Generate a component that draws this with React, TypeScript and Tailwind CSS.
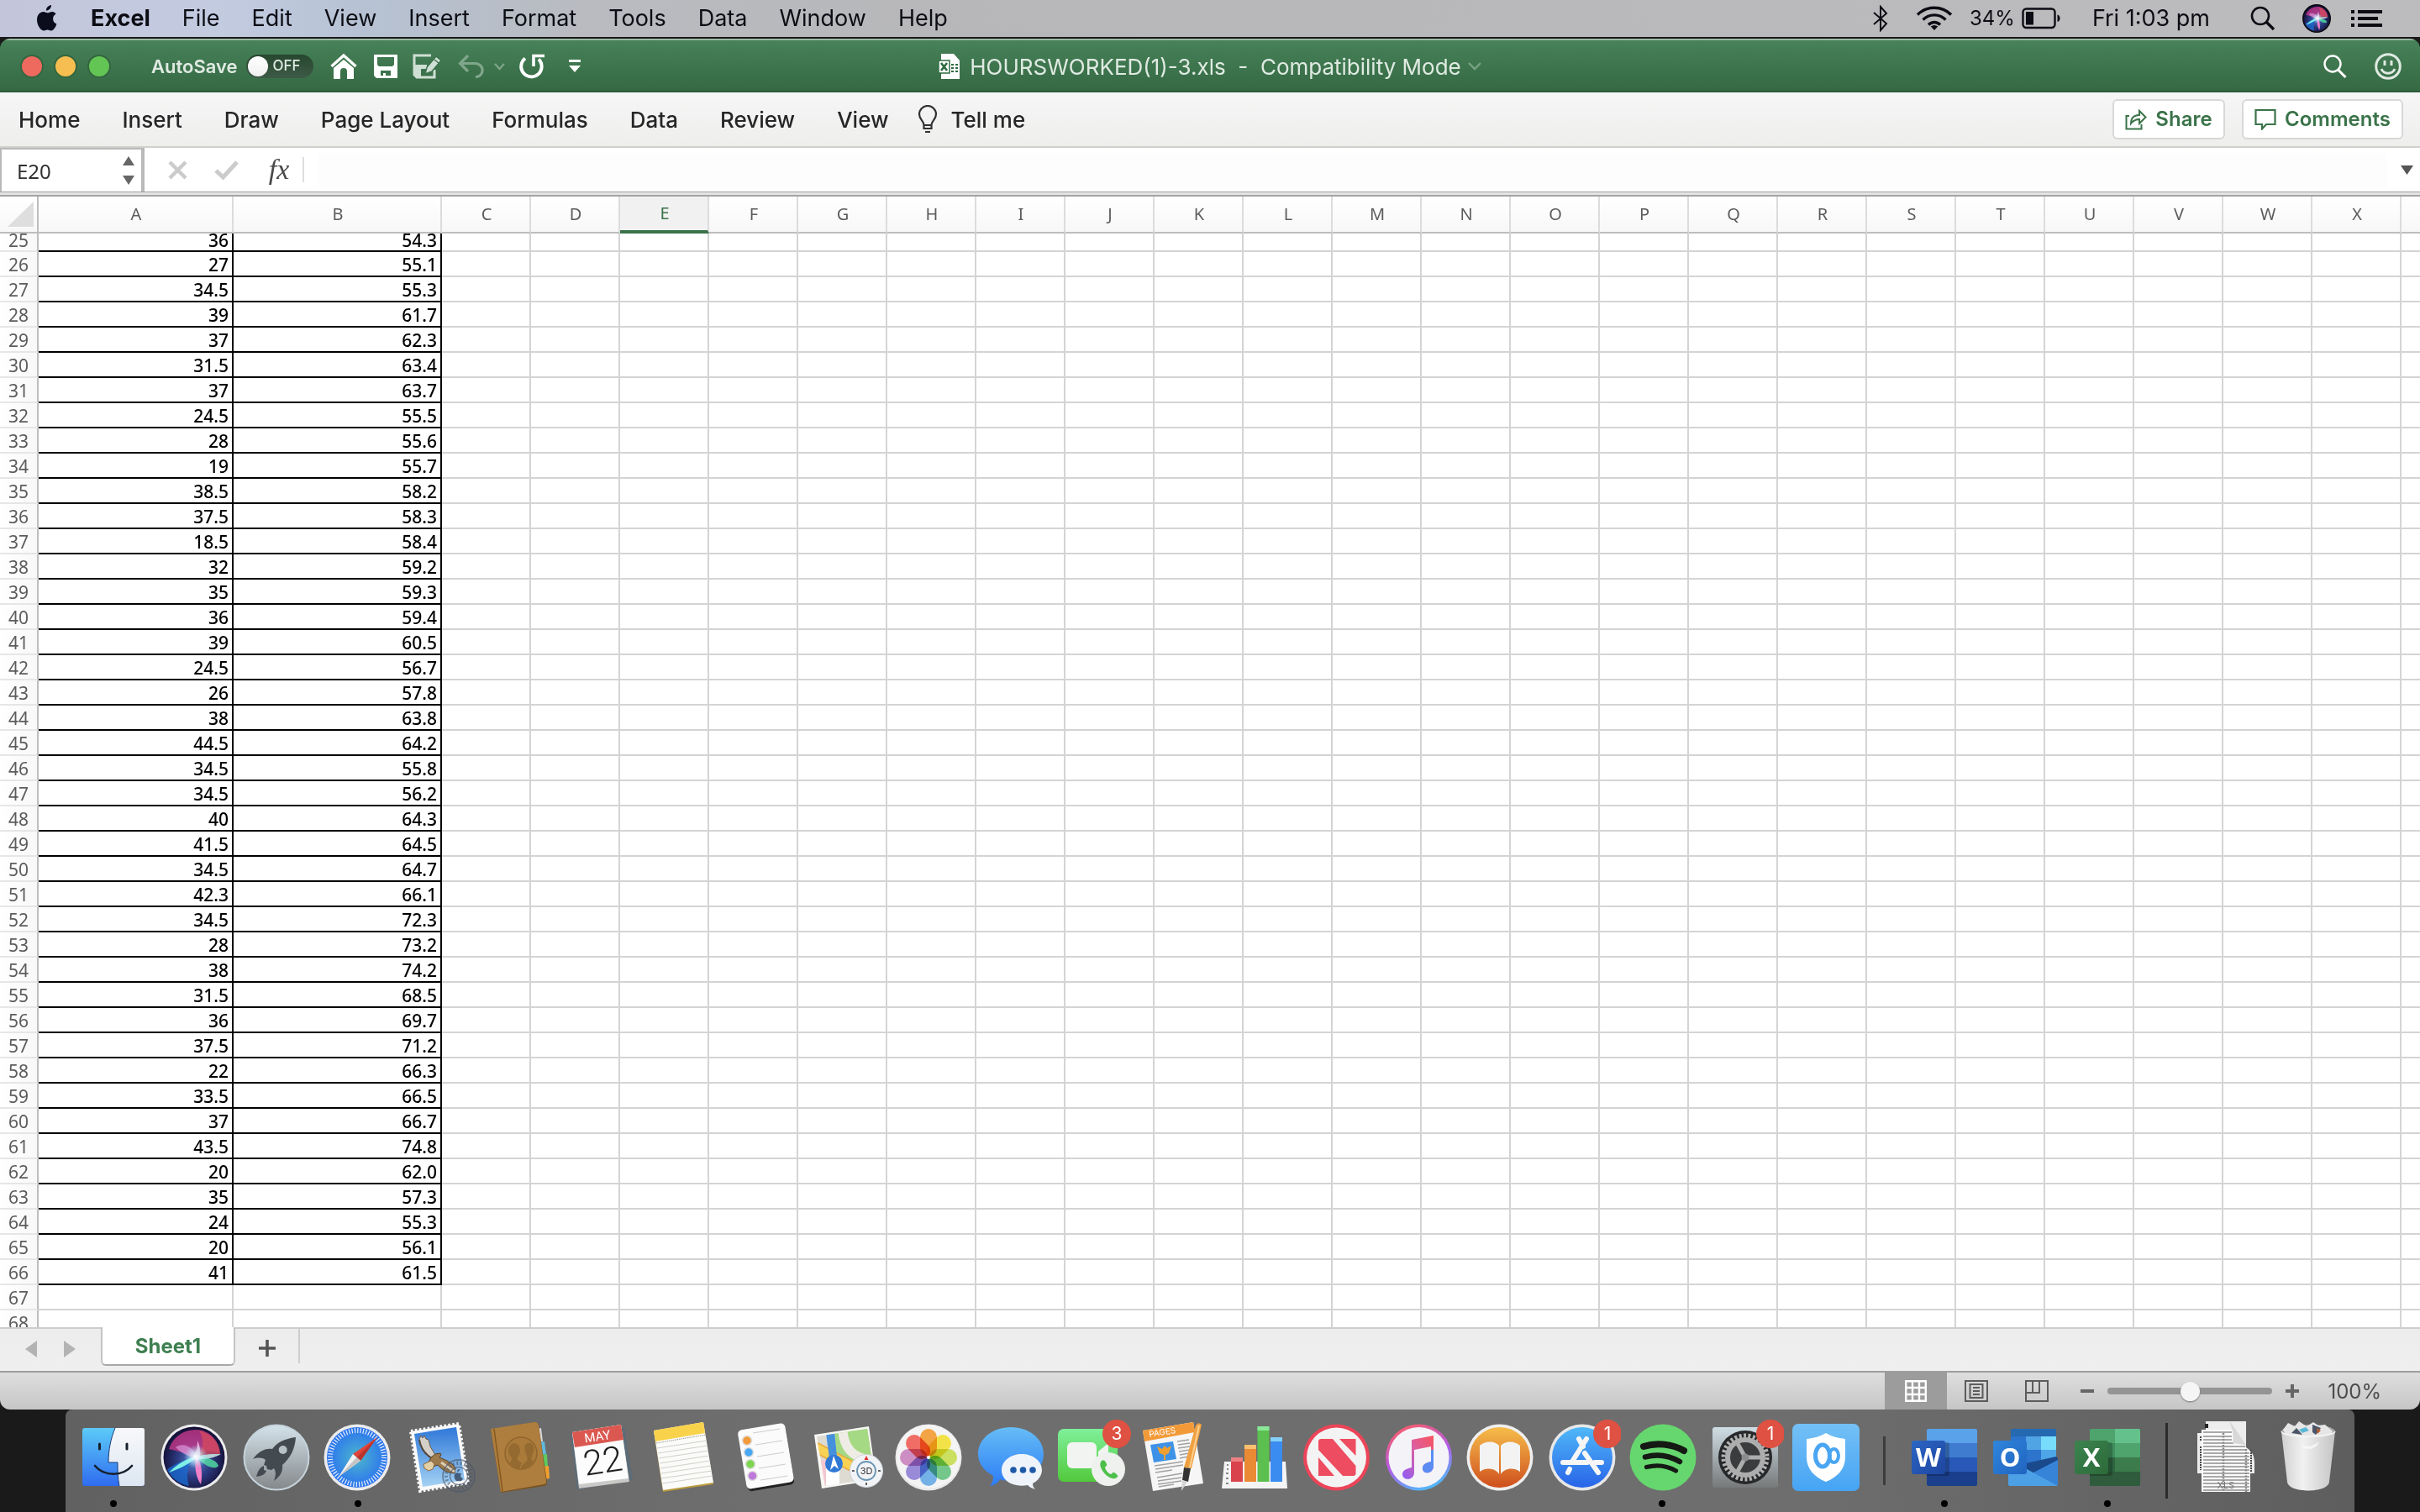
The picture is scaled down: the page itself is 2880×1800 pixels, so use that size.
import { useState, type ReactNode } from "react";
import clsx from "clsx";

const MENUS = ["File", "Edit", "View", "Insert", "Format", "Tools", "Data", "Window", "Help"];
const TABS = ["Home", "Insert", "Draw", "Page Layout", "Formulas", "Data", "Review", "View"];
const COLUMNS = "CDEFGHIJKLMNOPQRSTUVWX".split("");
const FIRST_ROW = 25;

const HOURS: [string, string][] = [
  ["36", "54.3"],
  ["27", "55.1"],
  ["34.5", "55.3"],
  ["39", "61.7"],
  ["37", "62.3"],
  ["31.5", "63.4"],
  ["37", "63.7"],
  ["24.5", "55.5"],
  ["28", "55.6"],
  ["19", "55.7"],
  ["38.5", "58.2"],
  ["37.5", "58.3"],
  ["18.5", "58.4"],
  ["32", "59.2"],
  ["35", "59.3"],
  ["36", "59.4"],
  ["39", "60.5"],
  ["24.5", "56.7"],
  ["26", "57.8"],
  ["38", "63.8"],
  ["44.5", "64.2"],
  ["34.5", "55.8"],
  ["34.5", "56.2"],
  ["40", "64.3"],
  ["41.5", "64.5"],
  ["34.5", "64.7"],
  ["42.3", "66.1"],
  ["34.5", "72.3"],
  ["28", "73.2"],
  ["38", "74.2"],
  ["31.5", "68.5"],
  ["36", "69.7"],
  ["37.5", "71.2"],
  ["22", "66.3"],
  ["33.5", "66.5"],
  ["37", "66.7"],
  ["43.5", "74.8"],
  ["20", "62.0"],
  ["35", "57.3"],
  ["24", "55.3"],
  ["20", "56.1"],
  ["41", "61.5"],
  ["", ""],
  ["", ""],
];

/* ---------- Menu bar ---------- */

const SiriOrb = ({ id }: { id: string }) => (
  <>
    <defs>
      <radialGradient id={`${id}-bg`} cx="50%" cy="55%" r="55%">
        <stop offset="0" stopColor="#5a7fd0" />
        <stop offset=".5" stopColor="#2c3a80" />
        <stop offset="1" stopColor="#120c30" />
      </radialGradient>
      <radialGradient id={`${id}-core`}>
        <stop offset="0" stopColor="#fff" />
        <stop offset=".4" stopColor="#d8f4ff" stopOpacity=".7" />
        <stop offset="1" stopColor="#9fe8f4" stopOpacity="0" />
      </radialGradient>
    </defs>
    <circle cx="40" cy="40" r="36.500" fill={`url(#${id}-bg)`} />
    <path d="M10 30C16 12 34 4 50 8c12 4 20 14 20 28-12-6-20-4-30 4C28 34 18 32 10 30z" fill="#d03a8c" opacity=".75" />
    <path d="M46 8c16 4 25 16 25 28-8 6-18 5-28 4C52 30 52 18 46 8z" fill="#d34a5e" opacity=".8" />
    <path d="M8 54C18 48 28 42 40 40c-8 10-10 22-6 34C22 72 12 64 8 54z" fill="#1c6ad0" opacity=".8" />
    <path d="M18 28c10-8 24 2 26 14-8-2-18-6-26-14z" fill="#e8b0f0" opacity=".55" />
    <path d="M10 58c8-8 18-16 34-20-6 8-18 14-34 20z" fill="#7df0e6" />
    <path d="M42 38c8 8 8 24 6 34-6-8-8-22-6-34z" fill="#f080c8" />
    <path d="M42 38c12 2 24 4 27 12-4 6-18 0-27-12z" fill="#4fd8a0" opacity=".85" />
    <path d="M36 42c12-6 24-6 36-6-10 6-22 6-36 6z" fill="#b8f4f4" opacity=".8" />
    <path d="M44 20c4 8 4 16 2 24l-8-2c4-6 6-14 6-22z" fill="#ffd0ea" opacity=".75" />
    <circle cx="42" cy="39" r="14" fill={`url(#${id}-core)`} />
  </>
);

const MenuBar = () => (
  <header className="flex h-11 shrink-0 items-center justify-between bg-[linear-gradient(90deg,#c3c6da_0,#c3cbe1_9%,#b6c2d3_15%,#b9bbc0_24%,#b7b7b9_40%,#bcbcbe_100%)] pl-[42px] pr-[45px] text-[27px] text-[#0c0c14]">
    <nav className="flex items-center gap-[38px]">
      <button aria-label="Apple menu">
        <svg width="28" height="34" viewBox="0 0 28 34" fill="#0b0d1c">
          <path d="M19 1c.3 3-2.500 6.500-6 6.600C12.600 4.600 15.700 1.400 19 1zM24.600 11.600c-2.300 1.400-3.500 3.300-3.500 5.800 0 2.800 1.600 5 4.300 6.100-1 3.400-3.600 7.900-6.400 8-1.700 0-2.500-1.100-4.600-1.100s-3 1.100-4.600 1.100C6.300 31.500 2 25 2 18.600 2 12.600 5.800 9 9.600 9c2 0 3.600 1.300 4.900 1.300 1.200 0 3.200-1.400 5.500-1.400 1 0 3.200.300 4.600 2.700z" />
        </svg>
      </button>
      <button className="font-bold">Excel</button>
      {MENUS.map((m) => (
        <button key={m}>{m}</button>
      ))}
    </nav>
    <div className="flex items-center">
      <svg width="20" height="32" viewBox="0 0 20 32" fill="none" stroke="#0c0c14" strokeWidth="2">
        <path d="M2 9l15 13-7 8V2l7 8L2 23" />
      </svg>
      <svg className="ml-8" width="44" height="30" viewBox="0 0 44 30" fill="none" stroke="#0c0c14" strokeWidth="3.400">
        <path d="M2 10.500C13-.5 31-.5 42 10.500M8.500 16.500c7.500-7.500 19.500-7.500 27 0M15 22.500c4-4 10-4 14 0" />
        <path d="M17.800 24.600a6 6 0 0 1 8.400 0L22 29z" fill="#0c0c14" stroke="none" />
      </svg>
      <span className="ml-5 text-[24px]">34%</span>
      <svg className="ml-2" width="48" height="26" viewBox="0 0 48 26">
        <rect x="1.500" y="1.500" width="38" height="22.500" rx="4" fill="none" stroke="#0c0c14" strokeWidth="2.400" />
        <rect x="5" y="5" width="9" height="15.500" fill="#0c0c14" />
        <path d="M42.500 8.500c4 1 4 7.500 0 8.500z" fill="#0c0c14" />
      </svg>
      <span className="ml-9">Fri 1:03 pm</span>
      <button aria-label="Spotlight" className="ml-12">
        <svg width="30" height="30" viewBox="0 0 30 30" fill="none" stroke="#0c0c14" strokeWidth="2.600">
          <circle cx="12" cy="12" r="10" />
          <path d="M19 19l9 9" strokeWidth="3.400" />
        </svg>
      </button>
      <button aria-label="Siri" className="ml-8">
        <svg width="34" height="34" viewBox="0 0 80 80">
          <circle cx="40" cy="40" r="40" fill="#08080c" />
          <SiriOrb id="menu-siri" />
        </svg>
      </button>
      <button aria-label="Notification Centre" className="ml-6">
        <svg width="37" height="22" viewBox="0 0 37 22" fill="#0c0c14">
          <path d="M0 1h4v4H0zM8 1h29v4H8zM0 9h4v4H0zM8 9h24v4H8zM0 17h4v4H0zM8 17h29v4H8z" />
        </svg>
      </button>
    </div>
  </header>
);

/* ---------- Excel window ---------- */

const TitleBar = () => (
  <div className="grid h-16 shrink-0 grid-cols-[1fr_auto_1fr] items-center border-b-2 border-t-2 border-b-[#2c5a38] border-t-[#9bbba5] bg-linear-to-b from-[#478259] to-[#356943] px-[22px] pt-[2px] text-[#dfeae2]">
    <div className="flex items-center">
      <div className="flex gap-3 pl-[2px]">
        <button aria-label="Close" className="size-7 rounded-full border-2 border-[#34663f] bg-[#ee6a5f]" />
        <button aria-label="Minimise" className="size-7 rounded-full border-2 border-[#34663f] bg-[#f6be50]" />
        <button aria-label="Zoom" className="size-7 rounded-full border-2 border-[#34663f] bg-[#62c554]" />
      </div>
      <label className="ml-12 flex items-center gap-[10px] text-[22px] font-semibold">
        AutoSave
        <input type="checkbox" className="peer sr-only" />
        <span className="flex h-7 w-20 items-center gap-[6px] rounded-full bg-linear-to-b from-[#27472f] to-[#3d5a46] px-[2px] text-[17px] font-medium">
          <span className="size-6 rounded-full bg-linear-to-b from-white to-[#f0f0f0]" />
          OFF
        </span>
      </label>
      <button aria-label="Home" className="ml-5">
        <svg width="32" height="32" viewBox="0 0 32 32">
          <path d="M1.500 16L16 3l14.500 13" fill="none" stroke="#fff" strokeWidth="3.400" />
          <path d="M4 18L16 8l12 10v13h-8v-9a4 4 0 0 0-8 0v9H4z" fill="#fff" />
        </svg>
      </button>
      <button aria-label="Save" className="ml-5">
        <svg width="28" height="28" viewBox="0 0 28 28">
          <path fillRule="evenodd" d="M0 0h28v28H3l-3-3zM4 3v9l2 2h16l2-2V3zM8 19v6h3v-3h3v3h6v-6z" fill="#fff" />
        </svg>
      </button>
      <button aria-label="Save as" className="ml-[18px]">
        <svg width="36" height="30" viewBox="0 0 36 30">
          <path d="M22 2H2v23l3 3h21v-9" fill="none" stroke="#cfdfd4" strokeWidth="3" />
          <path d="M3 13h14v5h-7v9H3z" fill="#cfdfd4" />
          <path d="M15 24l2-8L28 3l6 5-11 13z" fill="#cfdfd4" stroke="#3c724c" strokeWidth="1.500" />
          <path d="M26 7l5 4" stroke="#3c724c" strokeWidth="1.500" />
        </svg>
      </button>
      <button aria-label="Undo" className="ml-[18px]">
        <svg width="31" height="28" viewBox="0 0 31 28" fill="none" stroke="#80a68b" strokeWidth="3.200">
          <path d="M12 1L2.500 10.500 12 20M3 10.500h17c12 0 12 16 1 16" />
        </svg>
      </button>
      <button aria-label="Undo history" className="ml-3">
        <svg width="13" height="9" viewBox="0 0 13 9" fill="none" stroke="#80a68b" strokeWidth="2.200">
          <path d="M1 1l5.500 6L12 1" />
        </svg>
      </button>
      <button aria-label="Redo" className="ml-4">
        <svg width="32" height="30" viewBox="0 0 32 30" fill="none" stroke="#fff" strokeWidth="4">
          <path d="M8 5.500a12.200 12.200 0 1 0 16 1" />
          <path d="M18 15V2.500h13" strokeWidth="3.600" />
        </svg>
      </button>
      <button aria-label="Customise toolbar" className="ml-7">
        <svg width="14" height="16" viewBox="0 0 14 16" fill="#fff">
          <path d="M0 0h14v3H0zM0 7h14l-7 8z" />
        </svg>
      </button>
    </div>
    <button className="flex items-center text-[26px]">
      <svg width="25" height="30" viewBox="0 0 25 30">
        <path d="M3 0h15l7 8v22H3z" fill="#fff" />
        <path d="M0 8h13v15H0z" fill="#fff" stroke="#2e6b40" strokeWidth="1.500" />
        <path d="M3 11l7 9M10 11l-7 9" stroke="#2e6b40" strokeWidth="2.600" />
        <path d="M15 12h3v2h-3zM20 12h3v2h-3zM15 16h3v2h-3zM20 16h3v2h-3zM15 20h3v2h-3zM20 20h3v2h-3z" fill="#2e6b40" />
      </svg>
      <span className="ml-3 whitespace-pre">HOURSWORKED(1)-3.xls  -  Compatibility Mode</span>
      <svg className="ml-2" width="16" height="10" viewBox="0 0 16 10" fill="none" stroke="#79a286" strokeWidth="2.400">
        <path d="M1 1l7 7 7-7" />
      </svg>
    </button>
    <div className="flex items-center justify-end gap-8">
      <button aria-label="Search">
        <svg width="30" height="28" viewBox="0 0 30 28" fill="none" stroke="#fff" strokeWidth="2.400">
          <circle cx="12" cy="11" r="9.500" />
          <path d="M18.500 18l9 9" strokeWidth="3" />
        </svg>
      </button>
      <button aria-label="Feedback">
        <svg width="32" height="32" viewBox="0 0 32 32" fill="none" stroke="#dfeae2" strokeWidth="3">
          <circle cx="16" cy="16" r="14.300" />
          <path d="M12 9v6M20 9v6" />
          <path d="M8 19c3 7 13 7 16 0" />
        </svg>
      </button>
    </div>
  </div>
);

const Ribbon = () => (
  <div className="flex h-[66px] shrink-0 items-center justify-between border-b-2 border-[#cfcfcd] bg-linear-to-b from-[#f6f6f6] to-[#eeeeed] pl-[22px] pr-5 text-[26px] font-medium text-[#262626]">
    <nav className="flex items-center gap-[50px]">
      {TABS.map((t) => (
        <button key={t}>{t}</button>
      ))}
      <button className="-ml-4 flex items-center gap-4">
        <svg width="24" height="34" viewBox="0 0 24 34" fill="none" stroke="#303030" strokeWidth="2.200">
          <path d="M7.500 24c0-5-5.500-7-5.500-13a10 10 0 0 1 20 0c0 6-5.500 8-5.500 13zM7.500 24v4h9v-4M9 32h6" />
        </svg>
        Tell me
      </button>
    </nav>
    <div className="flex gap-5 text-[24px] font-semibold text-[#3a7349]">
      <button className="flex h-12 w-[134px] items-center justify-center gap-[10px] rounded-md border-2 border-[#d8d8d8] bg-white">
        <svg width="26" height="26" viewBox="0 0 26 26" fill="none" stroke="#3a7349" strokeWidth="2">
          <path d="M5 9H1.500v15.500h18V19" />
          <path d="M7 18c0-7 4-10 10-10V3l7.500 7.500L17 18v-5c-4 0-7 1-10 5z" />
        </svg>
        Share
      </button>
      <button className="flex h-12 w-[192px] items-center justify-center gap-[10px] rounded-md border-2 border-[#d8d8d8] bg-white">
        <svg width="26" height="26" viewBox="0 0 26 26" fill="none" stroke="#3a7349" strokeWidth="2.200">
          <path d="M1.500 2h23v17H14l-5 5.500V19H1.500z" />
        </svg>
        Comments
      </button>
    </div>
  </div>
);

const FormulaBar = () => (
  <div className="flex h-[58px] shrink-0 items-center border-b-2 border-[#a3a3a3] bg-[linear-gradient(180deg,#fff_0,#fff_52px,#a0a0a0_52px,#a0a0a0_53px,#e4e4e4_53px)] pb-1">
    <div className="flex h-full w-[172px] items-center justify-between border-l-2 border-r-4 border-t-2 border-[#b9b9b9] pr-2">
      <input
        aria-label="Name box"
        defaultValue="E20"
        className="w-28 bg-transparent pl-[18px] pt-[2px] font-['Noto_Sans','Open_Sans',sans-serif] text-[24px] text-[#303030] outline-none"
      />
      <svg width="14" height="34" viewBox="0 0 14 34" fill="#666">
        <path d="M7 0l7 11H0zM7 34l7-11H0z" />
      </svg>
    </div>
    <button aria-label="Cancel" className="ml-7">
      <svg width="23" height="23" viewBox="0 0 23 23" fill="none" stroke="#cbcbcb" strokeWidth="4.500">
        <path d="M2 2l19 19M21 2L2 21" />
      </svg>
    </button>
    <button aria-label="Enter" className="ml-8">
      <svg width="29" height="23" viewBox="0 0 29 23" fill="none" stroke="#cbcbcb" strokeWidth="5">
        <path d="M2 12l8.500 8L27 2" />
      </svg>
    </button>
    <button
      aria-label="Insert function"
      className="ml-8 w-8 font-['Liberation_Serif',serif] text-[34px] italic leading-8 text-[#4a4a4a]"
    >
      fx
    </button>
    <span className="ml-3 h-[30px] w-[2px] bg-[#dedede]" />
    <input aria-label="Formula" className="mx-4 h-10 flex-1 bg-[#fdfdfd] px-2 text-[24px] outline-none" />
    <svg className="mr-2" width="15" height="11" viewBox="0 0 15 11" fill="#555">
      <path d="M0 0h15L7.500 11z" />
    </svg>
  </div>
);

const Grid = () => {
  const [active] = useState("E");

  return (
    <div className="min-h-0 flex-1 overflow-hidden bg-white">
      <table className="w-full table-fixed border-separate border-spacing-0 font-['Noto_Sans','Open_Sans',sans-serif] text-[21px]">
        <colgroup>
          <col className="w-[46px]" />
          <col className="w-[232px]" />
          <col className="w-[248px]" />
          {COLUMNS.map((c) => (
            <col key={c} className="w-[106px]" />
          ))}
          <col />
        </colgroup>
        <thead>
          <tr className="h-11 bg-linear-to-b from-white to-[#f7f7f7] text-[20px] leading-7 text-[#5c5c5c]">
            <th aria-label="Select all" className="border-b-2 border-r-2 border-[#bdbdbd] p-0">
              <svg className="ml-[9px]" width="32" height="32" viewBox="0 0 32 32">
                <path d="M31 1v30H0z" fill="#dedede" />
              </svg>
            </th>
            {["A", "B", ...COLUMNS].map((c) => (
              <th
                key={c}
                scope="col"
                className={clsx(
                  "border-b-2 border-r-2 border-r-[#dcdcdc] p-0 pl-[2px] font-normal",
                  c === active
                    ? "border-b-4 border-b-[#3a7349] bg-[#f1f1f1] text-[#3a7349]"
                    : "border-b-[#bdbdbd]"
                )}
              >
                {c}
              </th>
            ))}
            <th className="border-b-2 border-b-[#bdbdbd] p-0" />
          </tr>
        </thead>
        <tbody>
          {HOURS.map(([hours, weight], i) => {
            const filled = hours !== "";
            const cell = clsx(
              "border-b-2 border-r-2 p-0 pr-1 text-right font-medium",
              filled ? "border-black" : "border-[#d4d4d4]"
            );
            // the top row is scrolled partly under the header
            const inner = i === 0 ? "h-5 leading-4" : "h-7 leading-[30px]";
            return (
              <tr key={i}>
                <th
                  scope="row"
                  className="border-b-2 border-r-2 border-b-[#e6e6e6] border-r-[#bdbdbd] bg-linear-to-r from-white to-[#f8f8f8] p-0 font-normal text-[#5c5c5c]"
                >
                  <div className={inner}>{FIRST_ROW + i}</div>
                </th>
                <td className={cell}>
                  <div className={inner}>{hours}</div>
                </td>
                <td className={cell}>
                  <div className={inner}>{weight}</div>
                </td>
                {COLUMNS.map((c) => (
                  <td key={c} className="border-b-2 border-r-2 border-[#d4d4d4] p-0" />
                ))}
                <td className="border-b-2 border-[#d4d4d4] p-0" />
              </tr>
            );
          })}
        </tbody>
      </table>
    </div>
  );
};

const SheetTabs = () => (
  <div className="flex h-[54px] shrink-0 items-start border-b-2 border-t-2 border-b-[#9e9e9e] border-t-[#cdcdcd] bg-linear-to-b from-[#ececec] to-[#efefef]">
    <div className="flex h-12 w-[120px] items-center gap-8 pl-[30px]">
      <button aria-label="Previous sheet">
        <svg width="14" height="20" viewBox="0 0 14 20" fill="#b3b3b3">
          <path d="M14 0v20L0 10z" />
        </svg>
      </button>
      <button aria-label="Next sheet">
        <svg width="14" height="20" viewBox="0 0 14 20" fill="#b3b3b3">
          <path d="M0 0v20l14-10z" />
        </svg>
      </button>
    </div>
    <button className="-mt-[2px] h-[46px] w-40 rounded-b-md border-2 border-t-0 border-[#c4c4c4] border-b-[#a8a8a8] bg-white pt-[2px] text-[24px] font-bold text-[#3f7f50]">
      Sheet1
    </button>
    <button aria-label="Add sheet" className="flex h-[41px] w-[77px] items-center justify-center border-r-2 border-[#cdcdcd] pt-1">
      <svg width="20" height="20" viewBox="0 0 20 20" stroke="#555" strokeWidth="3.600">
        <path d="M10 0v20M0 10h20" />
      </svg>
    </button>
  </div>
);

const StatusBar = () => (
  <footer className="flex h-11 shrink-0 items-center justify-end bg-linear-to-b from-[#dedede] to-[#c6c6c6] pr-[46px]">
    <button aria-label="Normal view" className="flex h-full w-[74px] items-center justify-center bg-[#9c9c9c]">
      <svg width="26" height="26" viewBox="0 0 26 26" fill="none" stroke="#fff" strokeWidth="2.400">
        <path d="M1.200 1.200h23.600v23.600H1.200zM9 1v24M17 1v24M1 9h24M1 17h24" />
      </svg>
    </button>
    <button aria-label="Page layout" className="ml-[21px]">
      <svg width="28" height="26" viewBox="0 0 28 26" fill="none" stroke="#5c5c5c" strokeWidth="2">
        <path d="M1 1h26v24H1zM6.500 5h15v16h-15zM10 9h8M10 13h8M10 17h8" />
      </svg>
    </button>
    <button aria-label="Page break preview" className="ml-11">
      <svg width="28" height="26" viewBox="0 0 28 26" fill="none" stroke="#5c5c5c" strokeWidth="2">
        <path d="M1 1h26v24H1zM1 15h16V1M9 1v14" />
      </svg>
    </button>
    <button aria-label="Zoom out" className="ml-[38px]">
      <svg width="16" height="16" viewBox="0 0 16 16" stroke="#666" strokeWidth="4">
        <path d="M0 8h16" />
      </svg>
    </button>
    <input
      type="range"
      aria-label="Zoom level"
      min={0}
      max={200}
      defaultValue={100}
      className="mx-4 h-2 w-49 appearance-none rounded-full bg-[#949494] [&::-webkit-slider-thumb]:size-[23px] [&::-webkit-slider-thumb]:appearance-none [&::-webkit-slider-thumb]:rounded-full [&::-webkit-slider-thumb]:bg-[#f5f5f5] [&::-webkit-slider-thumb]:shadow-[0_1px_2px_#777]"
    />
    <button aria-label="Zoom in">
      <svg width="16" height="16" viewBox="0 0 16 16" stroke="#666" strokeWidth="4">
        <path d="M0 8h16M8 0v16" />
      </svg>
    </button>
    <span className="ml-8 w-[66px] pt-[2px] text-right text-[24px] text-[#4c4c4c]">100%</span>
  </footer>
);

/* ---------- Dock ---------- */

const Badge = ({ x, count }: { x: number; count: number }) => (
  <g>
    <circle cx={x} cy="27" r="17" fill="#df5142" />
    <text x={x} y="34" textAnchor="middle" fontSize="21" fill="#fff">
      {count}
    </text>
  </g>
);

const OfficeTile = ({ id, letter, shades, tile }: { id: string; letter: string; shades: string[]; tile: [string, string] }) => (
  <>
    <linearGradient id={id} x2="1" y2="1">
      <stop stopColor={tile[0]} />
      <stop offset="1" stopColor={tile[1]} />
    </linearGradient>
    <path d="M28 38V23q0-2 2-2h56q2 0 2 2v15z" fill={shades[0]} />
    <path d="M28 38h60v17H28z" fill={shades[1]} />
    <path d="M28 55h60v17H28z" fill={shades[2]} />
    <path d="M28 72h60v15q0 2-2 2H30q-2 0-2-2z" fill={shades[3]} />
    {letter === "X" && (
      <>
        <path d="M58 21h28q2 0 2 2v15H58z" fill="#65c18c" />
        <path d="M28 38h30v17H28z" fill="#3f8f5b" />
        <path d="M28 55h30v17H28z" fill="#2d6440" />
      </>
    )}
    <path d="M28 37h24q3 0 3 3v34q0 3-3 3H28z" fill="#000" opacity=".22" />
    <rect x="10" y="35" width="40" height="40" rx="3" fill={`url(#${id})`} />
    <text x="30" y="66" textAnchor="middle" fontSize="31" fontWeight="700" fill="#fff" className="font-['Open_Sans',sans-serif]">
      {letter}
    </text>
  </>
);

const PETALS = ["#f39a2c", "#f2e030", "#c5dc4c", "#62c07c", "#62a8e4", "#8c7cd4", "#c880bc", "#ee5a50"];

type DockItem = { name: string; running?: boolean; art: ReactNode };

const APPS: DockItem[] = [
  {
    name: "Finder",
    running: true,
    art: (
      <>
        <linearGradient id="finder" x2="0" y2="1">
          <stop stopColor="#5ccbf8" />
          <stop offset="1" stopColor="#2f6cf0" />
        </linearGradient>
        <linearGradient id="finder-face" x2="0" y2="1">
          <stop stopColor="#f8f8fa" />
          <stop offset="1" stopColor="#dce6f2" />
        </linearGradient>
        <rect x="12" y="20" width="74" height="69" rx="3" fill="url(#finder)" />
        <path d="M51 20c-5 12-8 26-8 41h11c0 10 0 18 2 28h27q3 0 3-3V23q0-3-3-3z" fill="url(#finder-face)" />
        <path d="M51 20c-5 12-8 26-8 41h11c0 10 0 18 2 28" fill="none" stroke="#1c3c78" strokeWidth="1" />
        <path d="M32.500 39v6M65 39v6" stroke="#16202c" strokeWidth="3" strokeLinecap="round" />
        <path d="M27 65c11 13 33 13 44 0" fill="none" stroke="#16202c" strokeWidth="2.600" strokeLinecap="round" />
      </>
    ),
  },
  {
    name: "Siri",
    art: (
      <g transform="translate(8 15)">
        <circle cx="40" cy="40" r="39.500" fill="#ececee" />
        <SiriOrb id="dock-siri" />
      </g>
    ),
  },
  {
    name: "Launchpad",
    art: (
      <>
        <linearGradient id="launch" x2="0" y2="1">
          <stop stopColor="#d3e2ea" />
          <stop offset="1" stopColor="#84888a" />
        </linearGradient>
        <circle cx="49" cy="55" r="38.500" fill="url(#launch)" stroke="#c5d3da" strokeWidth="2" />
        <path d="M72 31c-14 2-22 6-28 14-9-1-16 3-23 12 6-2 11-2 15 1l-2 6 3 1 1 4 5 1 3-2c3 5 2 9 0 15 7-5 11-11 10-19 9-8 15-18 16-33z" fill="#434a50" />
        <path d="M34 65c-5 2-7 6-9 13 6-1 10-2 12-7l-3-1z" fill="#434a50" />
        <circle cx="56.700" cy="46" r="5" fill="#b7c2c8" />
      </>
    ),
  },
  {
    name: "Safari",
    running: true,
    art: (
      <>
        <radialGradient id="safari">
          <stop stopColor="#4db6cc" />
          <stop offset="1" stopColor="#2a72f0" />
        </radialGradient>
        <circle cx="48" cy="55" r="39.500" fill="#ececec" />
        <circle cx="48" cy="55" r="36" fill="url(#safari)" />
        <circle cx="48" cy="55" r="32" fill="none" stroke="#e4effc" strokeWidth="6" strokeDasharray="1.200 2.151" />
        <path d="M72 31L43 51l9 8z" fill="#e0443a" />
        <path d="M72 31L47.500 55l4.500 4z" fill="#b8352e" />
        <path d="M26 78l17-27 9 8z" fill="#f2f2f2" />
        <path d="M26 78l21.500-23 4.500 4z" fill="#c4c4c4" />
      </>
    ),
  },
  {
    name: "Mail",
    art: (
      <>
        <linearGradient id="mail" x2="0" y2="1">
          <stop stopColor="#2f78d8" />
          <stop offset="1" stopColor="#a4d2f4" />
        </linearGradient>
        <path d="M15 24l57-9 11 70-57 10z" fill="#fafafa" stroke="#fafafa" strokeWidth="4" strokeDasharray="2.600 2.400" />
        <path d="M19 27l50-8 10 63-50 8z" fill="url(#mail)" />
        <path d="M25 33l2-4 2 3 2-3 2 4 3 1 2 8 6 10-3 4c-8-4-14-10-16-23z" fill="#d4d0c8" stroke="#6a5a48" strokeWidth="1" />
        <path d="M25 34c2 12 8 18 15 22" fill="none" stroke="#54483a" strokeWidth="2" />
        <path d="M39 55l5-4 6-1 1 2-2 3c6 3 15 5 19 13l-1 6c-9-1-15-4-20-10l-6 2-6-3z" fill="#9c7a4c" stroke="#5a4128" strokeWidth="1" />
        <path d="M51 61c6 4 11 8 16 11" fill="none" stroke="#d9cdb8" strokeWidth="3" />
        <path d="M30 63l9-4 4 4-2 6-5 2-5-3z" fill="#e3cfa6" stroke="#8a6a40" strokeWidth="1" />
        <g fill="none" stroke="#49566a" opacity=".6">
          <circle cx="72" cy="77" r="19" strokeWidth="1.800" />
          <circle cx="72" cy="77" r="15" strokeWidth="4" strokeDasharray="2 2.500" />
          <circle cx="72" cy="77" r="10.500" strokeWidth="1.500" />
        </g>
        <path d="M73 69c0 2-1 3-3 3 0-2 1-3 3-3zM76 74c-3 2-2 5 1 6-1 3-3 4-5 3-5 2-7-7-4-9 3-2 5 1 8 0z" fill="#33435c" opacity=".8" />
      </>
    ),
  },
  {
    name: "Contacts",
    art: (
      <>
        <path d="M68 21l5-1 2 16-5 1z" fill="#d6d6d6" />
        <path d="M71 37l6-1 2 15-6 1z" fill="#62b8dc" />
        <path d="M73 52l7-1 1 15-6 1z" fill="#5fc861" />
        <path d="M75 66l7-1 1 15-6 1z" fill="#f0a02c" />
        <path d="M13 22l52-9q4 0 5 4l10 67q0 4-3 5l-52 8z" fill="#7a5424" />
        <path d="M13 21l52-8q4 0 5 4l9 66q0 4-3 4l-51 9z" fill="#ae7e3e" />
        <path d="M17 21l10 74" stroke="#84591f" strokeWidth="1.500" />
        <circle cx="49" cy="50" r="19" fill="#a97a3a" stroke="#90652c" strokeWidth="1.500" />
        <clipPath id="contacts">
          <circle cx="49" cy="50" r="18" />
        </clipPath>
        <g clipPath="url(#contacts)" fill="#946a30">
          <ellipse cx="41" cy="47" rx="7" ry="9" />
          <path d="M38 52h7v6c3 3 6 2 7 12H31c0-8 5-8 7-12z" />
          <g stroke="#a97a3a" strokeWidth="1.500">
            <path d="M54 50c-3-8 0-13 4-13 6 0 9 6 6 13-1 2-2 4-2 7 2 3 6 2 7 6v8H48c0-8 4-9 8-13 0-3-1-6-2-8z" />
          </g>
        </g>
      </>
    ),
  },
  {
    name: "Calendar",
    art: (
      <>
        <path d="M11 30l64-11 10 63-66 11z" fill="#5c6c78" />
        <path d="M13 25l58-9 10 68-60 8z" fill="#c9c9c7" />
        <path d="M13 25l58-9 9 64-59 7z" fill="#fcfcfc" />
        <path d="M13 25l58-9 3 18-58 9z" fill="#da5850" />
        <g transform="rotate(-8.500 46 50)" textAnchor="middle" className="font-['Roboto',sans-serif]">
          <text x="46" y="35" fontSize="15" fill="#fff">
            MAY
          </text>
          <text x="48" y="74" fontSize="42" fontWeight="300" fill="#1e1e1e">
            22
          </text>
        </g>
      </>
    ),
  },
  {
    name: "Notes",
    art: (
      <>
        <path d="M13 24l59-10 12 73-60 9z" fill="#b99a3c" />
        <path d="M13 23l59-10 12 72-60 9z" fill="#fbfbf9" />
        <path d="M13 23l59-10 2 13-59 10z" fill="#f8d24a" />
        <path d="M16 38l59-10" stroke="#9a9a94" strokeDasharray="1.500 1" />
        <path d="M17 44l59-9M18 50l59-9M19 56l59-9M20 62l59-9M21 68l59-9M22 74l59-9M22 80l60-9M23 86l60-9" stroke="#cfcfcb" />
      </>
    ),
  },
  {
    name: "Reminders",
    art: (
      <>
        <g transform="rotate(-9.500 49 54)">
          <rect x="22" y="20" width="56" height="72" rx="5" fill="#222" />
          <rect x="21" y="18" width="57" height="71" rx="5" fill="#fbfbfb" />
        </g>
        <path d="M34 26l32-5M37 40l32-5M39 54l32-5M41 68l32-5M43 82l32-5" stroke="#cdcdcd" />
        <g stroke="#dedede" strokeWidth="1.500">
          <circle cx="27" cy="35" r="5.500" fill="#f39a3a" />
          <circle cx="29" cy="49" r="5.500" fill="#4aa8f2" />
          <circle cx="31" cy="63" r="5.500" fill="#7ed650" />
          <circle cx="33.500" cy="77" r="5.500" fill="#bf78dc" />
        </g>
      </>
    ),
  },
  {
    name: "Maps",
    art: (
      <>
        <clipPath id="map">
          <path d="M13 30l60-9 9 59-59 9z" />
        </clipPath>
        <path d="M10 28l65-10 9 64-65 10z" fill="#f7f7f3" />
        <g clipPath="url(#map)">
          <path d="M10 18h75v75H10z" fill="#dedbd3" />
          <path d="M34 20h50v44L60 60 36 52z" fill="#a5d983" />
          <path d="M44 24c2 24 18 36 44 34" fill="none" stroke="#efece5" strokeWidth="11" />
          <path d="M52 20c4 14 16 24 32 22V18z" fill="#a5d983" />
          <path d="M10 58h14v34H10z" fill="#f4c6d0" />
          <path d="M24 60h16v32H24z" fill="#fff" />
          <path d="M10 42l30 16 40 20" fill="none" stroke="#e9a83a" strokeWidth="13" />
          <path d="M10 42l30 16 40 20" fill="none" stroke="#f8d254" strokeWidth="10" />
          <path d="M24 26l10-2 3 30-9 2z" fill="#4590dc" />
        </g>
        <circle cx="33.500" cy="62.500" r="10.500" fill="#2f78d6" />
        <path d="M33 53l6 16-5-4-5 5z" fill="#fff" />
        <circle cx="72" cy="71" r="19.500" fill="#f1f3f6" stroke="#d0d4da" />
        <circle cx="72" cy="71" r="11" fill="none" stroke="#6a94b4" strokeWidth="1.800" />
        <path d="M72 53l2.500 5h-5z" fill="#e03028" />
        <path d="M55 71h3M86 71h3M72 85v3" stroke="#333" strokeWidth="1.500" />
        <text x="72" y="75" textAnchor="middle" fontSize="11" fill="#333">
          3D
        </text>
      </>
    ),
  },
  {
    name: "Photos",
    art: (
      <>
        <circle cx="49" cy="55" r="39.500" fill="#e9e9e9" />
        <circle cx="49" cy="54" r="38" fill="#f4f4f4" />
        <g className="isolate">
          {PETALS.map((fill, i) => (
            <rect
              key={fill}
              x="39"
              y="21"
              width="20"
              height="33"
              rx="10"
              fill={fill}
              opacity=".88"
              transform={`rotate(${i * 45} 49 55)`}
              className="mix-blend-multiply"
            />
          ))}
        </g>
        <circle cx="49" cy="55" r="2" fill="#fff" />
      </>
    ),
  },
  {
    name: "Messages",
    art: (
      <>
        <linearGradient id="msg" x2="0" y2="1">
          <stop stopColor="#66bdf6" />
          <stop offset="1" stopColor="#2d7cf6" />
        </linearGradient>
        <path d="M50 19c22 0 39 14 39 32S72 83 50 83c-5 0-9-.5-13-2-2 4-6 7-12 8 3-3 4-7 4-12-11-6-18-15-18-26 0-18 17-32 39-32z" fill="url(#msg)" />
        <path d="M63 51c13 0 24 8 24 19 0 7-5 13-11 16 0 3 1 5 3 7-4-1-7-3-9-5-17 3-31-5-31-18 0-11 11-19 24-19z" fill="#eef4fa" />
        <g fill="#1f5aa8">
          <circle cx="53" cy="70" r="3.800" />
          <circle cx="64.500" cy="70" r="3.800" />
          <circle cx="76" cy="70" r="3.800" />
        </g>
      </>
    ),
  },
  {
    name: "FaceTime",
    art: (
      <>
        <linearGradient id="ft" x2="0" y2="1">
          <stop stopColor="#7ff09a" />
          <stop offset="1" stopColor="#52c93c" />
        </linearGradient>
        <rect x="9" y="21" width="71" height="63" rx="7" fill="url(#ft)" />
        <rect x="20" y="37" width="35" height="31" rx="6" fill="#f2f4f2" />
        <path d="M57 48l12-10v28H57z" fill="#f2f4f2" />
        <circle cx="69" cy="69" r="20" fill="#eef1ee" />
        <path d="M61 59c3-2 5 1 6 4 1 2-2 3-2 4 1 4 4 7 7 8 2 0 2-3 4-2 3 2 6 4 3 6-8 6-25-13-18-20z" fill="#4cc04a" />
        <Badge x={79} count={3} />
      </>
    ),
  },
  {
    name: "Pages",
    art: (
      <>
        <path d="M13 23l60-10 12 73-60 9z" fill="#f6f6f6" />
        <path d="M13 23l60-10 2 12-60 11z" fill="#f29a38" />
        <text x="21" y="31" fontSize="10" fill="#fff" transform="rotate(-9 21 31)">
          PAGES
        </text>
        <path d="M22 40l27-4 4 21-27 4z" fill="#3d92e8" />
        <path d="M30 42l6 3 3-4 3 3 5-3-3 9-4 2v6h-2v-6l-5-2z" fill="#f0a030" />
        <path d="M54 36l14-2M55 40l14-2M55 44l14-2M56 48l13-2M57 52l11-2M57 56l10-2M27 65l34-5M28 69l33-5M28 73l20-3M30 79l30-5M31 83l28-4M31 87l28-4M32 90l18-3" stroke="#a2a2a2" strokeWidth="1.300" />
        <path d="M76 17q3-5 7-1l-12 52-9-1z" fill="#f0a040" />
        <path d="M80 17l-11 50" stroke="#fbd090" strokeWidth="2" />
        <path d="M62 67l8 1-3 16-7-2z" fill="#333" />
        <path d="M60 82l6 2-7 11z" fill="#d4d4d4" />
      </>
    ),
  },
  {
    name: "Numbers",
    art: (
      <>
        <path d="M13 60h73l2 32H10z" fill="#f4f4f4" />
        <path d="M16 64h2M16 69h2M15 74h3M15 80h3M15 86h3" stroke="#888" strokeWidth="2" />
        <path d="M21 55h14v29H21z" fill="#d9434c" />
        <path d="M21 55h14v5H21z" fill="#ee8080" />
        <path d="M37 40h14v44H37z" fill="#ea8a34" />
        <path d="M37 40h14v5H37z" fill="#f8c070" />
        <path d="M52.500 18h14v66h-14z" fill="#5cc050" />
        <path d="M52.500 18h14v5h-14z" fill="#8ae898" />
        <path d="M68 31h14v53H68z" fill="#3b8cf0" />
        <path d="M68 31h14v5H68z" fill="#84d0f8" />
      </>
    ),
  },
  {
    name: "News",
    art: (
      <>
        <circle cx="49.500" cy="55" r="39.500" fill="#ec4458" />
        <circle cx="49.500" cy="55" r="35.500" fill="#f3f3f3" />
        <path d="M31 33h14l27.500 32v9q0 3-3 3H57L28 46V36q0-3 3-3zM53 33h19.500v20zM28 55l19 22H28z" fill="#ee4c60" />
      </>
    ),
  },
  {
    name: "Music",
    art: (
      <>
        <linearGradient id="music" x1=".3" x2=".7" y2="1">
          <stop stopColor="#fa5c6a" />
          <stop offset=".5" stopColor="#b45ce8" />
          <stop offset="1" stopColor="#48c0fa" />
        </linearGradient>
        <linearGradient id="note" x1="1" x2="0" y2="1">
          <stop stopColor="#f8545c" />
          <stop offset=".5" stopColor="#d860a8" />
          <stop offset="1" stopColor="#8c5cf8" />
        </linearGradient>
        <circle cx="50.500" cy="55" r="39.500" fill="url(#music)" />
        <circle cx="50.500" cy="55" r="36" fill="#f4f4f8" />
        <path d="M42 34l26-5v36c0 10-13 11-13 3 0-5 5-7 10-8V42l-20 4v27c0 10-14 10-14 2 0-5 6-7 11-8z" fill="url(#note)" />
        <path d="M65 60v-14h3v19c0 10-13 11-13 3 0-5 5-7 10-8z" fill="#5a8cf4" />
      </>
    ),
  },
  {
    name: "Books",
    art: (
      <>
        <linearGradient id="books" x2="0" y2="1">
          <stop stopColor="#f6bd4a" />
          <stop offset="1" stopColor="#cf4f1e" />
        </linearGradient>
        <circle cx="50" cy="55" r="39.500" fill="#efefef" />
        <circle cx="50" cy="55" r="36" fill="url(#books)" />
        <path d="M26 41c6-6 18-6 23 0v34c-4-7-15-9-23-3zM51 41c5-6 17-6 23 0v31c-8-6-19-4-23 3z" fill="#f3f3f3" />
      </>
    ),
  },
  {
    name: "App Store",
    art: (
      <>
        <linearGradient id="store" x2="0" y2="1">
          <stop stopColor="#50b8f8" />
          <stop offset="1" stopColor="#2864e8" />
        </linearGradient>
        <circle cx="51" cy="55" r="39.500" fill="#e8e8e8" />
        <circle cx="51" cy="55" r="36" fill="url(#store)" />
        <path d="M56 33L39 60M47 33l5 9M54 50l16 23M28 61h29M66 61h8M36 69l-2 4" stroke="#f6f6f6" strokeWidth="6" strokeLinecap="round" />
        <Badge x={81} count={1} />
      </>
    ),
  },
  {
    name: "Spotify",
    running: true,
    art: (
      <>
        <circle cx="50" cy="55" r="39.500" fill="#66d66e" />
        <g fill="none" stroke="#151a15" strokeLinecap="round">
          <path d="M27 42c16-5 34-3 48 5" strokeWidth="8" />
          <path d="M29 54.500c14-4 28-2 41 5.500" strokeWidth="6.500" />
          <path d="M30.500 66.500c12-3 24-2 35 4.500" strokeWidth="5.200" />
        </g>
      </>
    ),
  },
  {
    name: "System Preferences",
    art: (
      <>
        <linearGradient id="prefs" x2="0" y2="1">
          <stop stopColor="#cfdde4" />
          <stop offset="1" stopColor="#77797a" />
        </linearGradient>
        <rect x="12" y="19" width="78" height="72" rx="3" fill="url(#prefs)" />
        <circle cx="51" cy="55" r="32" fill="#26282a" />
        <circle cx="51" cy="55" r="26" fill="none" stroke="#b2b2b2" strokeWidth="5" strokeDasharray="3 2.445" />
        <circle cx="51" cy="55" r="21" fill="#3a3c3e" stroke="#adadad" strokeWidth="6" />
        <path d="M51 55h20M51 55L41 37M51 55L41 73" stroke="#adadad" strokeWidth="5" />
        <circle cx="51" cy="55" r="4.500" fill="#8c8c8c" />
        <Badge x={81} count={1} />
      </>
    ),
  },
  {
    name: "VPN",
    art: (
      <>
        <linearGradient id="vpn" x2="0" y2="1">
          <stop stopColor="#74c0f6" />
          <stop offset="1" stopColor="#46a4f4" />
        </linearGradient>
        <rect x="10" y="15" width="80" height="80" rx="7" fill="url(#vpn)" />
        <path d="M50 26c7 4 14 6 23 7v22c0 14-10 24-23 29-13-5-23-15-23-29V33c9-1 16-3 23-7z" fill="#fff" />
        <g fill="#fff" stroke="#4aa6f2">
          <ellipse cx="59.500" cy="53" rx="5.500" ry="8" strokeWidth="4" />
          <ellipse cx="46" cy="53" rx="8.500" ry="13" strokeWidth="5" />
        </g>
      </>
    ),
  },
];

const OFFICE: DockItem[] = [
  {
    name: "Word",
    running: true,
    art: <OfficeTile id="word" letter="W" shades={["#5aa2ea", "#3f7cd0", "#2859b8", "#1b3f8c"]} tile={["#2c66c4", "#1d45a0"]} />,
  },
  {
    name: "Outlook",
    art: (
      <>
        <linearGradient id="outlook" x2="1" y2="1">
          <stop stopColor="#2f86dc" />
          <stop offset="1" stopColor="#2064c0" />
        </linearGradient>
        <path d="M31 30v-7q0-2 2-2h50q2 0 2 2v7z" fill="#2569b0" />
        <path d="M31 30h54v34H31z" fill="#2c74cc" />
        <path d="M49 30h18v16H49z" fill="#50a4e4" />
        <path d="M67 30h18v16H67z" fill="#78dcfc" />
        <path d="M67 46h18v18H67z" fill="#4ea6e6" />
        <path d="M85 54l2 2v6L58 74 40 64z" fill="#1a4a8c" />
        <path d="M87 58v29q0 2-2 2H30l28-16z" fill="#3684d8" />
        <path d="M28 57l59 32H30q-2 0-2-2z" fill="#4ca0e6" />
        <rect x="10" y="35" width="40" height="40" rx="3" fill="url(#outlook)" />
        <text x="30" y="66" textAnchor="middle" fontSize="31" fontWeight="700" fill="#fff" className="font-['Open_Sans',sans-serif]">
          O
        </text>
      </>
    ),
  },
  {
    name: "Excel",
    running: true,
    art: <OfficeTile id="excel" letter="X" shades={["#4fa36c", "#4fa36c", "#3c7c4c", "#2e5c3c"]} tile={["#3c8450", "#2c6a38"]} />,
  },
];

const FILES: DockItem[] = [
  {
    name: "Downloads",
    art: (
      <>
        <path d="M24 12h48v30H24zM14 26h8v48h-8zM70 42q12 6 12 18v14H70z" fill="#ededed" />
        <path d="M18 30v6M18 42v28M78 46v26" stroke="#444" strokeWidth="2" strokeDasharray="2 1" />
        <path d="M23 15h4v5h-4z" fill="#222" />
        <path d="M19 22h37v16l14 2 7 10v46H19z" fill="#fbfbfb" />
        <path
          d="M21 25h34M21 30h34M21 34h34M21 38h36M21 42h50M21 46h52M21 50h55M21 54h55M21 58h55M21 62h55M21 66h55M21 70h55M21 74h55M21 78h55M21 82h55M21 86h55M21 90h55M21 94h55"
          stroke="#8e8e8e"
          strokeWidth="1.400"
        />
        <path d="M45 26v70M72 45v51" stroke="#8a8a8a" strokeWidth="2.500" strokeDasharray="2 1.500" />
        <path d="M52 12c6 6 10 14 20 28l-16-2c2-8 0-16-4-26z" fill="#d8d8d8" />
        <text x="48" y="92" textAnchor="middle" fontSize="11" fill="#777">
          XLS
        </text>
      </>
    ),
  },
  {
    name: "Trash",
    art: (
      <>
        <linearGradient id="trash">
          <stop stopColor="#d0d0d0" />
          <stop offset=".4" stopColor="#f1f1f1" />
          <stop offset="1" stopColor="#c4c4c4" />
        </linearGradient>
        <ellipse cx="49" cy="24" rx="32" ry="8" fill="#a8a8a8" />
        <path d="M19 22l6-8 8 4 5-6 9 6 8-5 6 4 8-1 9 8-4 8H24z" fill="#e6e6e6" />
        <path d="M29 26l6-6 7 8zM54 16l10 4-6 8-4-3z" fill="#4c5468" />
        <path d="M38 22l8-3 4 4-8 3z" fill="#5cb8d8" />
        <path d="M59 20l5 3-4 4z" fill="#b86030" />
        <path d="M17 24c2 8 62 8 64 0l-7 60c-1 14-49 14-50 0z" fill="url(#trash)" />
        <path d="M17 24c2 8 62 8 64 0" fill="none" stroke="#f8f8f8" strokeWidth="1.500" />
        <path d="M40 41c8 2 16 0 22-5-2 9-14 12-22 5z" fill="#fff" opacity=".6" />
      </>
    ),
  },
];

const DockGroup = ({ items }: { items: DockItem[] }) => (
  <>
    {items.map((item) => (
      <button key={item.name} aria-label={item.name} className="flex w-[97px] flex-col items-center">
        <svg width="97" height="108" viewBox="0 -2 97 108">
          {item.art}
        </svg>
        {item.running && <span className="size-2 rounded-full bg-black" />}
      </button>
    ))}
  </>
);

const Dock = () => (
  <div className="mx-auto flex h-[122px] shrink-0 items-start rounded-t-lg bg-[linear-gradient(90deg,#616161_0,#6e6e6e_30%,#6e6e6e_75%,#5e5e5e_100%)] pl-2 pr-[7px]">
    <DockGroup items={APPS} />
    <span className="mx-[21px] mt-8 h-[58px] w-[3px] bg-[#3c3c3c]" />
    <DockGroup items={OFFICE} />
    <span className="mx-[21px] mt-4 h-[90px] w-[3px] bg-[#2c2c2c]" />
    <DockGroup items={FILES} />
  </div>
);

const App = () => (
  <div className="flex h-screen flex-col overflow-hidden bg-[#1a1a1a] font-['Inter','Liberation_Sans',sans-serif]">
    <MenuBar />
    <main className="mt-[2px] flex min-h-0 flex-1 flex-col overflow-hidden rounded-xl">
      <TitleBar />
      <Ribbon />
      <FormulaBar />
      <Grid />
      <SheetTabs />
      <StatusBar />
    </main>
    <Dock />
  </div>
);

export default App;
